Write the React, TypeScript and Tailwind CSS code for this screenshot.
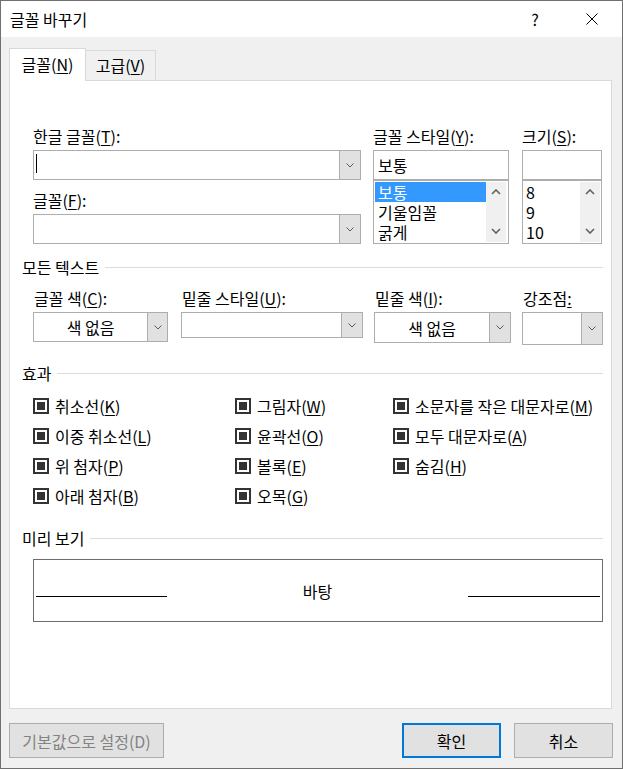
import React from "react";

const M = ({ children }: { children: React.ReactNode }) => (
  <span className="underline decoration-1 underline-offset-[2px]">{children}</span>
);

const SmallChev = () => (
  <svg width="8" height="5" viewBox="0 0 8 5">
    <polyline points="0.5,0.5 4,4 7.5,0.5" fill="none" stroke="#5a5a5a" strokeWidth="1" />
  </svg>
);

const ScrollChev = ({ up }: { up?: boolean }) => (
  <svg width="10" height="6" viewBox="0 0 10 6">
    <polyline
      points={up ? "1,5 5,1 9,5" : "1,1 5,5 9,1"}
      fill="none"
      stroke="#606060"
      strokeWidth="1.6"
    />
  </svg>
);

const Check = ({ label, k }: { label: string; k: string }) => (
  <div className="flex items-center h-[30px]">
    <div className="w-[16px] h-[16px] border-2 border-[#333333] bg-white flex items-center justify-center shrink-0">
      <div className="w-[8px] h-[8px] bg-[#333333]" />
    </div>
    <span className="ml-[6px] leading-[20px] whitespace-nowrap">
      {label}(<M>{k}</M>)
    </span>
  </div>
);

const SectionHeader = ({ title }: { title: string }) => (
  <div className="flex items-center h-[20px] pl-[12px] pr-[8px]">
    <span className="leading-[20px] whitespace-nowrap">{title}</span>
    <div className="flex-1 h-px bg-[#dcdcdc] ml-[6px]" />
  </div>
);

export default function App() {
  return (
    <div className="w-[623px] h-[769px] border border-[#707070] bg-[#f0f0f0] flex flex-col text-[16px] text-black font-['Noto_Sans_CJK_KR','Malgun_Gothic',sans-serif] overflow-hidden select-none">
      {/* Title bar */}
      <div className="h-[36px] bg-white flex items-center shrink-0">
        <div className="pl-[9px] leading-[20px] flex-1">글꼴 바꾸기</div>
        <div className="w-[20px] text-center leading-[20px] mr-[41px]">?</div>
        <svg width="12" height="12" viewBox="0 0 12 12" className="mr-[24px]">
          <line x1="0.5" y1="0.5" x2="11.5" y2="11.5" stroke="#000" strokeWidth="1" />
          <line x1="11.5" y1="0.5" x2="0.5" y2="11.5" stroke="#000" strokeWidth="1" />
        </svg>
      </div>

      {/* Body */}
      <div className="flex-1 flex flex-col pl-[8px] pr-[10px] pt-[11px] pb-[10px]">
        {/* Tabs */}
        <div className="flex items-end h-[33px] mb-[-1px]">
          <div className="relative z-10 w-[77px] h-[33px] bg-white border border-b-0 border-[#d9d9d9] flex items-center justify-center leading-[20px] pb-[3px]">
            글꼴(<M>N</M>)
          </div>
          <div className="w-[70px] h-[31px] border border-l-0 border-b-0 border-[#d9d9d9] flex items-center justify-center leading-[20px] pb-[3px]">
            고급(<M>V</M>)
          </div>
        </div>

        {/* Panel */}
        <div className="h-[629px] bg-white border border-[#d9d9d9] flex flex-col">
          {/* Font block */}
          <div className="mt-[45px] pl-[23px] flex">
            {/* Left column */}
            <div className="w-[328px] flex flex-col">
              <div className="h-[20px] leading-[20px]">
                한글 글꼴(<M>T</M>):
              </div>
              <div className="mt-[4px] h-[30px] flex border border-[#adadad] bg-white">
                <div className="flex-1 flex items-center pl-[2px] pb-[3px]">
                  <div className="w-px h-[19px] bg-black" />
                </div>
                <div className="w-[21px] bg-[#e1e1e1] border-l border-[#adadad] flex items-center justify-center">
                  <SmallChev />
                </div>
              </div>
              <div className="mt-[10px] h-[20px] leading-[20px]">
                글꼴(<M>F</M>):
              </div>
              <div className="mt-[4px] h-[30px] flex border border-[#adadad] bg-white">
                <div className="flex-1" />
                <div className="w-[21px] bg-[#e1e1e1] border-l border-[#adadad] flex items-center justify-center">
                  <SmallChev />
                </div>
              </div>
            </div>

            {/* Style column */}
            <div className="w-[136px] ml-[12px] flex flex-col">
              <div className="h-[20px] leading-[20px] whitespace-nowrap">
                글꼴 스타일(<M>Y</M>):
              </div>
              <div className="mt-[4px] h-[30px] border border-[#adadad] bg-white flex items-center pl-[4px] leading-[20px]">
                보통
              </div>
              <div className="h-[64px] border border-[#adadad] bg-white p-[1px] flex">
                <div className="w-[111px] flex flex-col">
                  <div className="h-[20px] leading-[20px] bg-[#3399ff] text-white pl-[3px]">보통</div>
                  <div className="h-[20px] leading-[20px] pl-[3px]">기울임꼴</div>
                  <div className="h-[20px] leading-[20px] pl-[3px]">굵게</div>
                </div>
                <div className="flex-1 bg-[#f0f0f0] flex flex-col justify-between mr-[1px]">
                  <div className="h-[20px] flex items-center justify-center">
                    <ScrollChev up />
                  </div>
                  <div className="h-[20px] flex items-center justify-center pb-[2px]">
                    <ScrollChev />
                  </div>
                </div>
              </div>
            </div>

            {/* Size column */}
            <div className="w-[80px] ml-[13px] flex flex-col">
              <div className="h-[20px] leading-[20px] whitespace-nowrap">
                크기(<M>S</M>):
              </div>
              <div className="mt-[4px] h-[30px] border border-[#adadad] bg-white" />
              <div className="h-[64px] border border-[#adadad] bg-white p-[1px] flex">
                <div className="w-[56px] flex flex-col">
                  <div className="h-[20px] leading-[20px] pl-[2px]">8</div>
                  <div className="h-[20px] leading-[20px] pl-[2px]">9</div>
                  <div className="h-[20px] leading-[20px] pl-[2px]">10</div>
                </div>
                <div className="flex-1 bg-[#f0f0f0] flex flex-col justify-between">
                  <div className="h-[20px] flex items-center justify-center">
                    <ScrollChev up />
                  </div>
                  <div className="h-[20px] flex items-center justify-center pb-[2px]">
                    <ScrollChev />
                  </div>
                </div>
              </div>
            </div>
          </div>

          {/* All text */}
          <div className="mt-[13px]">
            <SectionHeader title="모든 텍스트" />
          </div>
          <div className="mt-[11px] pl-[23px] flex items-start h-[57px]">
            <div className="w-[135px] flex flex-col">
              <div className="h-[20px] leading-[20px] pl-[1px] whitespace-nowrap">
                글꼴 색(<M>C</M>):
              </div>
              <div className="mt-[4px] h-[30px] flex border border-[#adadad] bg-white">
                <div className="flex-1 flex items-center justify-center leading-[20px]">색 없음</div>
                <div className="w-[20px] bg-[#e1e1e1] border-l border-[#adadad] flex items-center justify-center">
                  <SmallChev />
                </div>
              </div>
            </div>
            <div className="w-[182px] ml-[13px] flex flex-col">
              <div className="h-[20px] leading-[20px] pl-[1px] whitespace-nowrap">
                밑줄 스타일(<M>U</M>):
              </div>
              <div className="mt-[4px] h-[26px] flex border border-[#adadad] bg-white">
                <div className="flex-1" />
                <div className="w-[21px] bg-[#e1e1e1] border-l border-[#adadad] flex items-center justify-center">
                  <SmallChev />
                </div>
              </div>
            </div>
            <div className="w-[137px] ml-[11px] flex flex-col">
              <div className="h-[20px] leading-[20px] pl-[1px] whitespace-nowrap">
                밑줄 색(<M>I</M>):
              </div>
              <div className="mt-[4px] h-[31px] flex border border-[#adadad] bg-white">
                <div className="flex-1 flex items-center justify-center leading-[20px]">색 없음</div>
                <div className="w-[21px] bg-[#e1e1e1] border-l border-[#adadad] flex items-center justify-center">
                  <SmallChev />
                </div>
              </div>
            </div>
            <div className="w-[81px] ml-[11px] flex flex-col">
              <div className="h-[20px] leading-[20px] pl-[1px] whitespace-nowrap">
                강조점<M>:</M>
              </div>
              <div className="mt-[4px] h-[33px] flex border border-[#adadad] bg-white">
                <div className="flex-1" />
                <div className="w-[21px] bg-[#e1e1e1] border-l border-[#adadad] flex items-center justify-center">
                  <SmallChev />
                </div>
              </div>
            </div>
          </div>

          {/* Effects */}
          <div className="mt-[18px]">
            <SectionHeader title="효과" />
          </div>
          <div className="mt-[8px] pl-[23px] grid grid-cols-[202px_158px_1fr]">
            <Check label="취소선" k="K" />
            <Check label="그림자" k="W" />
            <Check label="소문자를 작은 대문자로" k="M" />
            <Check label="이중 취소선" k="L" />
            <Check label="윤곽선" k="O" />
            <Check label="모두 대문자로" k="A" />
            <Check label="위 첨자" k="P" />
            <Check label="볼록" k="E" />
            <Check label="숨김" k="H" />
            <Check label="아래 첨자" k="B" />
            <Check label="오목" k="G" />
            <div />
          </div>

          {/* Preview */}
          <div className="mt-[17px]">
            <SectionHeader title="미리 보기" />
          </div>
          <div className="mt-[11px] ml-[23px] w-[570px] h-[63px] border border-[#6d6d6d] flex items-start px-[2px]">
            <div className="w-[131px] h-px bg-black mt-[36px]" />
            <div className="flex-1 text-center text-[16px] leading-[20px] mt-[21px]">바탕</div>
            <div className="w-[132px] h-px bg-black mt-[36px]" />
          </div>
        </div>

        {/* Buttons */}
        <div className="mt-[14px] h-[35px] flex mr-[-1px]">
          <div className="w-[155px] h-[35px] bg-[#e1e1e1] border border-[#adadad] flex items-center justify-center text-[#838383] leading-[20px]">
            기본값으로 설정(D)
          </div>
          <div className="ml-auto w-[99px] h-[35px] bg-[#e1e1e1] border-2 border-[#0078d7] flex items-center justify-center leading-[20px]">
            확인
          </div>
          <div className="ml-[13px] w-[99px] h-[35px] bg-[#e1e1e1] border border-[#adadad] flex items-center justify-center leading-[20px]">
            취소
          </div>
        </div>
      </div>
    </div>
  );
}
